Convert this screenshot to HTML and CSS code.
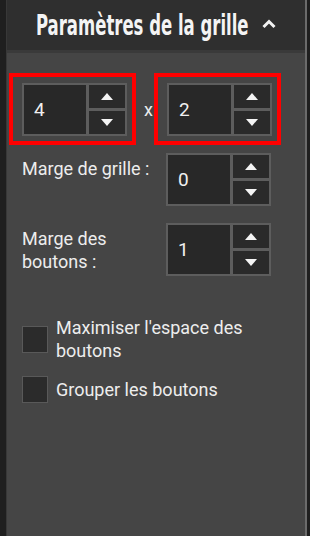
FILE: index.html
```html
<!DOCTYPE html>
<html lang="fr">
<head>
  <meta charset="UTF-8">
  <title>Paramètres de la grille</title>
  <link rel="stylesheet" href="styles.css">
</head>
<body>
  <div class="panel">
    <div class="panel-header">
      <h2><span>Paramètres de la grille</span></h2>
      <svg class="chevron" width="14" height="10" viewBox="0 0 14 10">
        <polyline points="1.5,8 7,2.5 12.5,8" fill="none" stroke="#f2f2f2" stroke-width="3"/>
      </svg>
    </div>

    <div class="panel-body">
      <div class="size-row">
        <div class="highlight">
          <div class="spinner">
            <input class="spinner-value" type="text" value="4">
            <div class="spinner-btns">
              <button class="spin-btn"><span class="arrow-up"></span></button>
              <button class="spin-btn"><span class="arrow-down"></span></button>
            </div>
          </div>
        </div>
        <span class="times">x</span>
        <div class="highlight">
          <div class="spinner">
            <input class="spinner-value" type="text" value="2">
            <div class="spinner-btns">
              <button class="spin-btn"><span class="arrow-up"></span></button>
              <button class="spin-btn"><span class="arrow-down"></span></button>
            </div>
          </div>
        </div>
      </div>

      <div class="field-row">
        <label>Marge de grille :</label>
        <div class="spinner">
          <input class="spinner-value" type="text" value="0">
          <div class="spinner-btns">
            <button class="spin-btn"><span class="arrow-up"></span></button>
            <button class="spin-btn"><span class="arrow-down"></span></button>
          </div>
        </div>
      </div>

      <div class="field-row">
        <label>Marge des boutons :</label>
        <div class="spinner">
          <input class="spinner-value" type="text" value="1">
          <div class="spinner-btns">
            <button class="spin-btn"><span class="arrow-up"></span></button>
            <button class="spin-btn"><span class="arrow-down"></span></button>
          </div>
        </div>
      </div>

      <div class="checks">
        <label class="check">
          <span class="box"></span>
          <span>Maximiser l'espace des boutons</span>
        </label>
        <label class="check">
          <span class="box"></span>
          <span>Grouper les boutons</span>
        </label>
      </div>
    </div>
  </div>
</body>
</html>
```

FILE: styles.css
```css
body {
  margin: 0;
  background: #1f1f1f;
  font-family: Roboto, "Liberation Sans", sans-serif;
  font-size: 18px;
  color: #ededed;
}
.panel {
  margin-left: 6px;
  width: 301px;
  min-height: 536px;
  box-sizing: border-box;
  background: #454545;
  border-left: 1px solid #383838;
  border-right: 2px solid #6b6b6b;
}
.panel-header {
  height: 50px;
  background: #2f2f2f;
  border-bottom: 3px solid #3a3a3a;
  display: flex;
  align-items: center;
  justify-content: center;
  gap: 14px;
  overflow: hidden;
}
.panel-header h2 {
  margin: 0;
  width: 212px;
  white-space: nowrap;
  font-family: "Liberation Sans Narrow", "DejaVu Sans Condensed", sans-serif;
  font-weight: bold;
  font-size: 28px;
  color: #f4f4f4;
}
.panel-header h2 span {
  display: inline-block;
  transform: scaleX(0.655);
  transform-origin: left center;
}
.chevron {
  margin-top: -2px;
}
.panel-body {
  padding: 30px 0 0 15px;
}
.size-row {
  display: flex;
  align-items: center;
}
.highlight {
  border: 4px solid #ff0000;
  padding: 6px 5px 5px 9px;
  margin: -10px -9px -9px -13px;
}
.times {
  width: 40px;
  text-align: center;
  padding-left: 3px;
  box-sizing: border-box;
}
.spinner {
  display: flex;
  gap: 3px;
  width: 105px;
  height: 53px;
  box-sizing: border-box;
  border: 2px solid #5d5d5d;
  background: #5d5d5d;
}
.spinner-value {
  width: 62px;
  margin: 0;
  border: none;
  padding: 0 0 0 10px;
  box-sizing: border-box;
  background: #282828;
  color: #f0f0f0;
  font-family: Roboto, "Liberation Sans", sans-serif;
  font-size: 19px;
}
.spinner-btns {
  flex: 1;
  display: flex;
  flex-direction: column;
  gap: 3px;
}
.spin-btn {
  flex: 1;
  margin: 0;
  padding: 0;
  border: none;
  background: #2a2a2a;
  display: flex;
  align-items: center;
  justify-content: center;
}
.arrow-up, .arrow-down {
  width: 0;
  height: 0;
  border-left: 6px solid transparent;
  border-right: 6px solid transparent;
}
.arrow-up {
  border-bottom: 7px solid #f4f4f4;
}
.arrow-down {
  border-top: 7px solid #f4f4f4;
}
.field-row {
  display: grid;
  grid-template-columns: 144px 105px;
  margin-top: 17px;
}
.field-row label {
  padding-top: 4px;
  line-height: 23px;
  padding-right: 8px;
}
.checks {
  margin-top: 40px;
  display: flex;
  flex-direction: column;
  gap: 14px;
}
.check {
  display: flex;
  align-items: center;
  gap: 8px;
  line-height: 23px;
  padding-right: 30px;
}
.box {
  flex: none;
  width: 26px;
  height: 27px;
  box-sizing: border-box;
  background: #2b2b2b;
  border: 1px solid #595959;
}
```
